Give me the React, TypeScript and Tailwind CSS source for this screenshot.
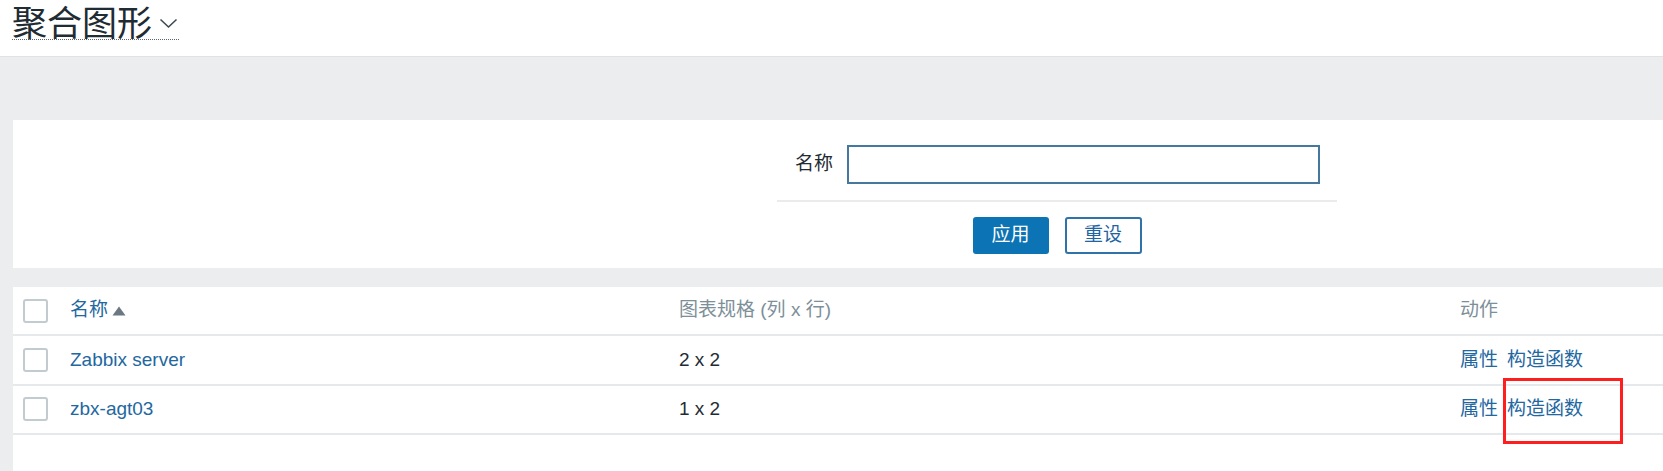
const font = { fontFamily: '"Liberation Sans", "Noto Sans CJK SC", sans-serif' }

const rows = [
  { name: 'Zabbix server', size: '2 x 2' },
  { name: 'zbx-agt03', size: '1 x 2' },
]

function Checkbox() {
  return <span className="block w-[25px] h-[24px] rounded-[3px] border-2 border-[#c2cbd0] bg-white" />
}

export default function App() {
  return (
    <div className="h-[471px] w-full overflow-hidden flex flex-col bg-[#ebedef] text-[#1f2c33]" style={font}>
      {/* Header */}
      <header className="h-[57px] shrink-0 bg-white border-b border-[#e0e3e5] pl-[12px] pt-[2px]">
        <div className="inline-flex items-center gap-[7px] border-b border-dotted border-[#5a6770]">
          <h1
            className="text-[35px] leading-[37px] font-normal text-[#1f2c33]"
            style={{ fontFamily: '"Noto Sans CJK SC", sans-serif' }}
          >
            聚合图形
          </h1>
          <svg width="19" height="11" viewBox="0 0 19 11" className="mt-[5px] mr-[1px]">
            <polyline points="1.5,1.5 9.5,9 17.5,1.5" fill="none" stroke="#3d4a52" strokeWidth="1.6" />
          </svg>
        </div>
      </header>

      {/* Filter */}
      <section className="mt-[63px] ml-[13px] h-[148px] shrink-0 bg-white">
        <div className="ml-[764px] w-[560px] pt-[25px]">
          <div className="flex items-center h-[39px]">
            <label className="w-[56px] text-right text-[19px] text-[#1f2c33]">名称</label>
            <input
              type="text"
              className="ml-[14px] w-[473px] h-[39px] border-2 border-[#44789f] bg-white outline-none px-2"
            />
          </div>
          <div className="mt-[16px] border-t-2 border-[#e9ebed]" />
          <div className="mt-[15px] flex justify-center gap-[16px]">
            <button className="w-[76px] h-[37px] rounded-[3px] bg-[#0c73b4] text-white text-[19px]">应用</button>
            <button className="w-[77px] h-[37px] rounded-[3px] border-2 border-[#2f73a8] bg-white text-[#1f65a0] text-[19px]">
              重设
            </button>
          </div>
        </div>
      </section>

      {/* List */}
      <section className="relative mt-[19px] ml-[13px] flex-1 bg-white text-[19px]">
        <div className="grid grid-cols-[57px_609px_781px_1fr] h-[49px] items-center border-b-2 border-[#e6e9eb]">
          <div className="pl-[10px]"><Checkbox /></div>
          <div className="flex items-center gap-[4px] text-[#23679f]">
            名称
            <svg width="14" height="10" viewBox="0 0 14 10">
              <polygon points="7,0.5 13.5,9.5 0.5,9.5" fill="#6b7882" />
            </svg>
          </div>
          <div className="text-[#7d8f99]">图表规格 (列 x 行)</div>
          <div className="text-[#7d8f99]">动作</div>
        </div>
        {rows.map((r) => (
          <div
            key={r.name}
            className="grid grid-cols-[57px_609px_781px_1fr] h-[49.5px] items-center border-b-2 border-[#e6e9eb]"
          >
            <div className="pl-[10px]"><Checkbox /></div>
            <a className="text-[#23679f]">{r.name}</a>
            <div className="text-[#1f2c33]">{r.size}</div>
            <div className="flex gap-[9px] text-[#23679f]">
              <a>属性</a>
              <a>构造函数</a>
            </div>
          </div>
        ))}

        {/* annotation */}
        <div className="absolute left-[1490px] top-[91px] w-[120px] h-[66px] border-[3px] border-[#ff1e1e]" />
      </section>
    </div>
  )
}
